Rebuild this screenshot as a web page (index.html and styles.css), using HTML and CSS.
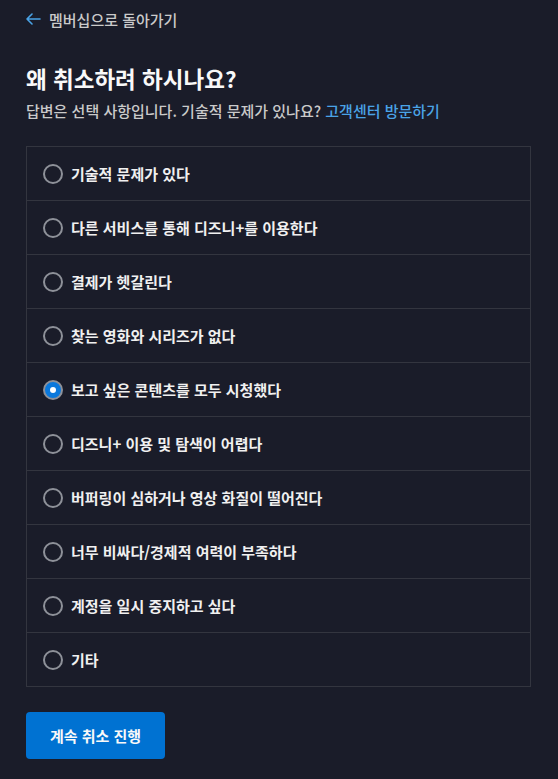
FILE: index.html
```html
<!DOCTYPE html>
<html lang="ko">
<head>
<meta charset="utf-8">
<link rel="stylesheet" href="styles.css">
</head>
<body>
<div class="page">
  <a class="back" href="#">
    <svg class="back-icon" width="15" height="12" viewBox="0 0 15 12"><path d="M6 1 L1 6 L6 11 M1 6 H14" fill="none" stroke="#4aa3e6" stroke-width="1.6" stroke-linecap="round" stroke-linejoin="round"/></svg>
    <span>멤버십으로 돌아가기</span>
  </a>
  <h1 class="title">왜 취소하려 하시나요?</h1>
  <p class="subtitle">답변은 선택 사항입니다. 기술적 문제가 있나요? <a class="link" href="#">고객센터 방문하기</a></p>
  <ul class="options">
    <li class="option"><span class="radio"></span><span>기술적 문제가 있다</span></li>
    <li class="option"><span class="radio"></span><span>다른 서비스를 통해 디즈니+를 이용한다</span></li>
    <li class="option"><span class="radio"></span><span>결제가 헷갈린다</span></li>
    <li class="option"><span class="radio"></span><span>찾는 영화와 시리즈가 없다</span></li>
    <li class="option"><span class="radio checked"></span><span>보고 싶은 콘텐츠를 모두 시청했다</span></li>
    <li class="option"><span class="radio"></span><span>디즈니+ 이용 및 탐색이 어렵다</span></li>
    <li class="option"><span class="radio"></span><span>버퍼링이 심하거나 영상 화질이 떨어진다</span></li>
    <li class="option"><span class="radio"></span><span>너무 비싸다/경제적 여력이 부족하다</span></li>
    <li class="option"><span class="radio"></span><span>계정을 일시 중지하고 싶다</span></li>
    <li class="option"><span class="radio"></span><span>기타</span></li>
  </ul>
  <button class="btn">계속 취소 진행</button>
</div>
</body>
</html>
```
FILE: styles.css
```css
html, body {
  margin: 0;
  padding: 0;
  background: #1a1c29;
  font-family: "Noto Sans CJK KR", "Noto Sans", sans-serif;
}
.page {
  padding: 8px 27px 0 26px;
}
.back {
  display: flex;
  align-items: center;
  gap: 8px;
  color: #cacaca;
  text-decoration: none;
  font-size: 15px;
  font-weight: 500;
  height: 22px;
}
.back-icon {
  display: block;
}
.title {
  margin: 33px 0 0;
  color: #f9f9f9;
  font-size: 22.5px;
  font-weight: 700;
  line-height: 30px;
}
.subtitle {
  margin: 8px 0 0;
  color: #cacaca;
  font-size: 15px;
  line-height: 20px;
  font-weight: 500;
}
.link {
  color: #4aa3e6;
  text-decoration: none;
}
.options {
  list-style: none;
  margin: 25px 0 0;
  padding: 0;
  border: 1px solid #33353f;
}
.option {
  display: flex;
  align-items: center;
  gap: 8px;
  height: 53px;
  padding-left: 16px;
  color: #f0f0f0;
  font-size: 15px;
  font-weight: 700;
  border-top: 1px solid #33353f;
}
.option:first-child {
  border-top: none;
}
.radio {
  box-sizing: border-box;
  width: 20px;
  height: 20px;
  border: 2px solid #8e9199;
  border-radius: 50%;
  flex: none;
}
.radio.checked {
  background: #0a78dc;
  position: relative;
}
.radio.checked::after {
  content: "";
  position: absolute;
  left: 5px;
  top: 5px;
  width: 6px;
  height: 6px;
  border-radius: 50%;
  background: #fff;
}
.btn {
  margin-top: 25px;
  width: 139px;
  height: 47px;
  border: none;
  border-radius: 4px;
  background: #0072d2;
  color: #f9f9f9;
  font-family: "Noto Sans CJK KR", "Noto Sans", sans-serif;
  font-size: 15px;
  font-weight: 700;
}
```
